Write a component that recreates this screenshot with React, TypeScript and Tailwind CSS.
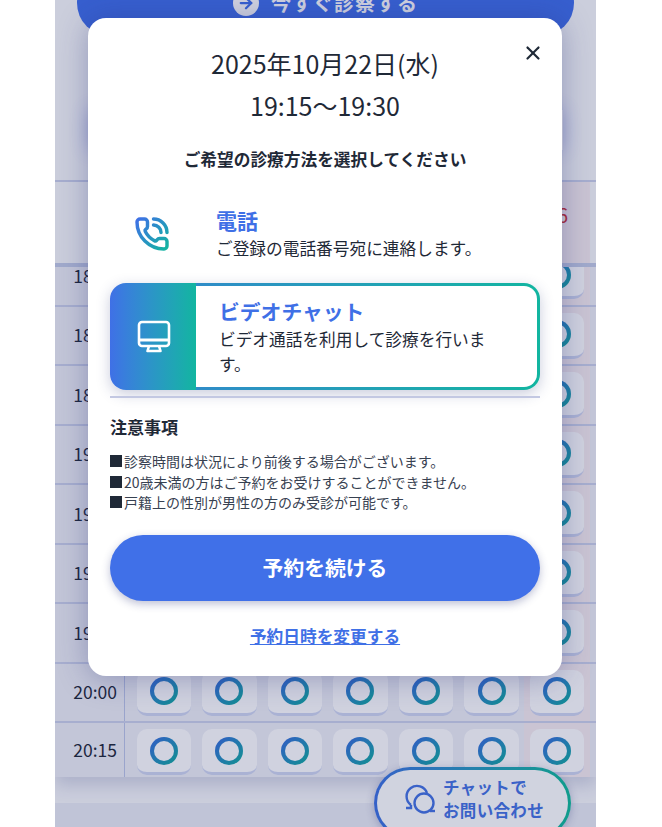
import React from 'react';
import { ArrowRight, PhoneCall, X } from 'lucide-react';

const times = ['18:15', '18:30', '18:45', '19:00', '19:15', '19:30', '19:45', '20:00', '20:15'];
const days = [0, 1, 2, 3, 4, 5, 6];
const notes = [
  '診察時間は状況により前後する場合がございます。',
  '20歳未満の方はご予約をお受けすることができません。',
  '戸籍上の性別が男性の方のみ受診が可能です。',
];

const Ring = () => (
  <div className="w-[28px] h-[28px] rounded-full bg-gradient-to-br from-[#3a68e0] to-[#0fae9a] p-[4px]">
    <div className="w-full h-full rounded-full bg-white" />
  </div>
);

const Row: React.FC<{ time: string; last: boolean }> = ({ time, last }) => (
  <div className={`flex bg-[#eff1f7] ${last ? 'h-[54px]' : 'h-[59.5px] border-b-2 border-[#ccd3ec]'}`}>
    <div className="w-[70px] shrink-0 flex items-center justify-end pr-[7px] border-r border-[#bcc6e8] text-[17.5px] text-[#1f2937]">
      {time}
    </div>
    <div className="flex-1 px-[6px] grid grid-cols-7">
      {days.map(d => (
        <div key={d} className={`px-[5.5px] pt-[6px] ${d === 6 ? 'bg-[#f8eef1]' : ''}`}>
          <div className="h-[46px] rounded-[10px] bg-white border-b-[3px] border-[#d0d7f2] flex items-center justify-center">
            <Ring />
          </div>
        </div>
      ))}
    </div>
  </div>
);

const App: React.FC = () => {
  return (
    <div className="relative h-[827px] overflow-hidden bg-white font-['Noto_Sans_CJK_JP','Noto_Sans',sans-serif]">
      <svg width="0" height="0" className="absolute">
        <defs>
          <linearGradient id="grad" gradientUnits="userSpaceOnUse" x1="2" y1="2" x2="22" y2="22">
            <stop offset="0%" stopColor="#3f70e6" />
            <stop offset="100%" stopColor="#12b5a0" />
          </linearGradient>
        </defs>
      </svg>

      {/* page behind the modal */}
      <div className="relative isolate overflow-hidden ml-[55px] w-[541px] h-[827px] bg-[#f9fafc]">
        <div className="px-[22px] -mt-[30px]">
          <div className="h-[66px] rounded-[33px] bg-[#4070ec] flex items-center justify-center gap-[12px] text-white font-bold text-[20px] tracking-[0.05em]">
            <span className="w-[26px] h-[26px] rounded-full bg-white flex items-center justify-center text-[#4070ec]">
              <ArrowRight size={18} strokeWidth={3} />
            </span>
            今すぐ診察する
          </div>
        </div>
        <div className="h-[144px] pt-[74px]">
          <div className="mx-[33px] h-[40px] bg-white shadow-[0_0_18px_rgba(60,80,200,0.3)]" />
        </div>
        <div className="relative z-10 h-[87px] bg-[#f9fafc] border-t-2 border-[#ccd3ec] border-b-[4px] border-b-[#c5cde8] flex justify-end pr-[6px]">
          <div className="w-[66px] bg-[#f8eef1] text-center text-[#d03030] text-[20px] pt-[18px]">26</div>
        </div>
        <div className="-mt-[20px] shadow-[0_8px_16px_rgba(40,50,120,0.18)]">
          {times.map((t, i) => (
            <Row key={t} time={t} last={i === times.length - 1} />
          ))}
        </div>
        <div className="h-[26px]" />
        <div className="h-[30px] bg-[#ebeef6]" />
      </div>

      {/* overlay */}
      <div className="absolute inset-y-0 left-[55px] w-[541px] bg-[#141e5f]/20" />

      <div className="absolute left-[374px] top-[767px] w-[197px] h-[72px] rounded-full p-[3px] bg-gradient-to-r from-[#3560c8] to-[#109c8c] shadow-[0_2px_8px_rgba(40,50,120,0.3)]">
        <div className="w-full h-full rounded-full bg-[#d0d3df] flex items-start gap-[7px] pl-[27px] pt-[6px]">
          <svg width="32" height="32" viewBox="0 0 32 32" fill="none" stroke="#3a62c8" strokeWidth="2.4" className="mt-[8px] shrink-0">
            <path d="M7 21 A10.5 10.5 0 1 1 23 9" />
            <path d="M7 21 L7 24 L2 24" />
            <circle cx="20" cy="19" r="9.5" />
            <path d="M26 27 L31 27" />
          </svg>
          <div className="text-[16.5px] leading-[23px] font-bold text-[#3a62c8] tracking-[0.02em]">
            チャットで<br />お問い合わせ
          </div>
        </div>
      </div>

      {/* modal */}
      <div className="absolute left-[88px] top-[18px] w-[474px] h-[658px] rounded-[18px] bg-white shadow-[0_2px_30px_rgba(40,50,120,0.35)] px-[22px] text-[#1f2937]">
        <button className="absolute right-[18px] top-[24px] text-[#1f2937]">
          <X size={22} strokeWidth={2.4} />
        </button>

        <div className="pt-[24px] text-center text-[25px] leading-[42px]">
          2025年10月22日(水)<br />19:15〜19:30
        </div>
        <div className="mt-[20px] text-center text-[16.7px] leading-[26px] font-bold">
          ご希望の診療方法を選択してください
        </div>

        <div className="mt-[18px] h-[87px] flex items-center">
          <div className="w-[84px] shrink-0 flex justify-center">
            <PhoneCall size={36} strokeWidth={2.3} stroke="url(#grad)" />
          </div>
          <div className="ml-[22px]">
            <div className="text-[21px] leading-[29px] font-bold text-[#3f70e6]">電話</div>
            <div className="text-[16.7px] leading-[27px]">ご登録の電話番号宛に連絡します。</div>
          </div>
        </div>

        <div className="mt-[6px] h-[107px] flex rounded-[16px] shadow-[0_4px_14px_rgba(40,50,120,0.25)]">
          <div className="w-[86px] shrink-0 rounded-l-[16px] bg-gradient-to-r from-[#3f70e6] to-[#12b5a0] flex items-center justify-center pl-[2px]">
            <svg width="36" height="36" viewBox="0 0 36 36" fill="none" stroke="white" strokeWidth="2.6" strokeLinejoin="round">
              <rect x="3" y="3" width="30" height="24" rx="3" />
              <path d="M3 21 H33" strokeWidth="3" />
              <path d="M13 27 L11.5 32 H24.5 L23 27" />
            </svg>
          </div>
          <div className="flex-1 rounded-r-[16px] py-[3px] pr-[3px] bg-gradient-to-r from-[#2f8cc8] to-[#12b5a0]">
            <div className="h-full rounded-r-[13px] bg-white pl-[23px] pr-[50px] pt-[10px]">
              <div className="text-[20.8px] leading-[31px] font-bold text-[#3f70e6]">ビデオチャット</div>
              <div className="text-[16.7px] leading-[25px]">ビデオ通話を利用して診療を行います。</div>
            </div>
          </div>
        </div>
        <div className="mt-[6px] border-t-2 border-[#c3c8e2]" />

        <div className="mt-[16px] text-[17px] leading-[26px] font-bold">注意事項</div>
        <div className="mt-[11px] text-[14px] leading-[20.5px] text-[#374151]">
          {notes.map(n => (
            <div key={n} className="flex items-center">
              <span className="w-[12px] h-[12px] mr-[2px] bg-[#1f2937] shrink-0" />
              {n}
            </div>
          ))}
        </div>

        <button className="mt-[22px] w-full h-[66px] rounded-full bg-[#4070e8] text-white text-[20.8px] font-bold shadow-[0_3px_8px_rgba(40,50,120,0.3)]">
          予約を続ける
        </button>
        <div className="mt-[22px] text-center text-[16.7px] leading-[26px] font-bold text-[#3f70e6] underline">
          予約日時を変更する
        </div>
      </div>
    </div>
  );
};

export default App;
